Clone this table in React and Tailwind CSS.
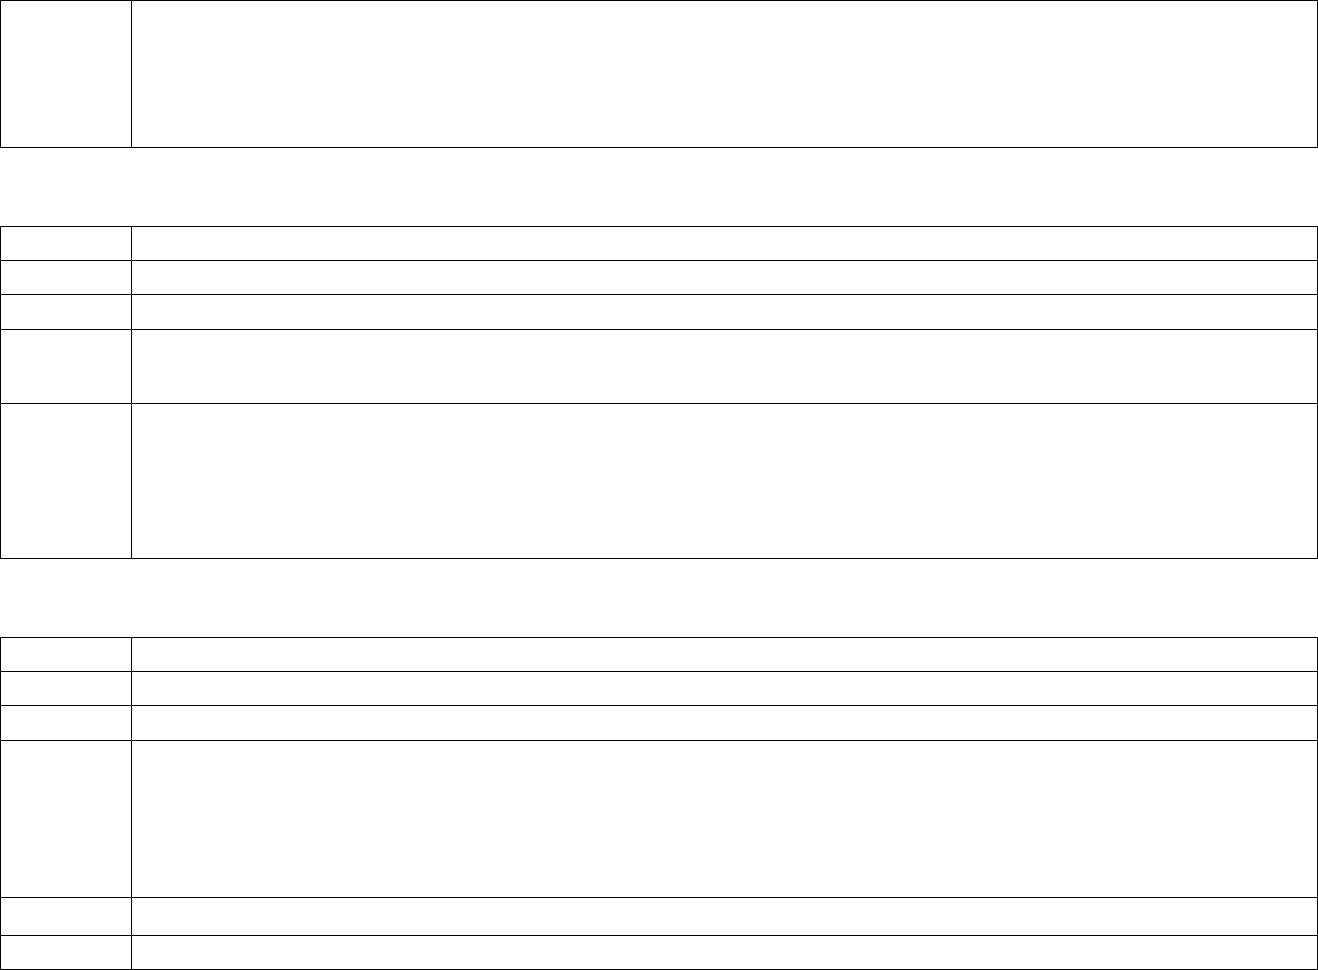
export default function App() {
  const tables = [
    [147],
    [34, 34, 35, 74, 155],
    [34, 34, 35, 157, 38, 34],
  ];
  return (
    <div className="w-full bg-white flex flex-col gap-[78px]" style={{ fontFamily: '"Liberation Sans", Arial, sans-serif' }}>
      {tables.map((rows, ti) => (
        <div key={ti} className="w-full border-t border-l border-r border-black flex flex-col">
          {rows.map((h, ri) => (
            <div key={ri} className="flex border-b border-black" style={{ height: h }}>
              <div className="w-[131px] shrink-0 border-r border-black"></div>
              <div className="flex-1"></div>
            </div>
          ))}
        </div>
      ))}
    </div>
  );
}
